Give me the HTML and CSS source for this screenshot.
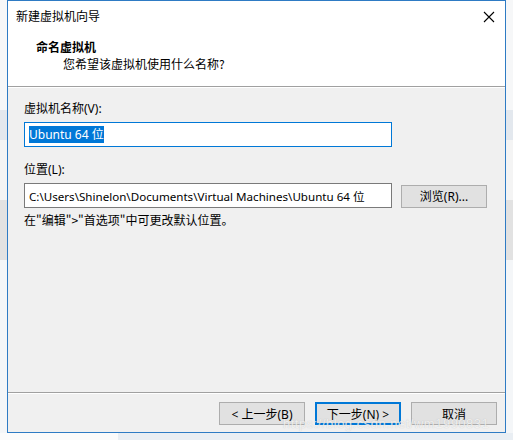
FILE: index.html
```html
<!DOCTYPE html>
<html lang="zh-CN">
<head>
<meta charset="utf-8">
<link rel="stylesheet" href="styles.css">
</head>
<body>
<div class="screen">
  <div class="window">
    <div class="titlebar">
      <span class="title">新建虚拟机向导</span>
      <span class="close" aria-label="关闭">
        <svg width="12" height="12" viewBox="0 0 12 12"><path d="M1 1L11 11M11 1L1 11" stroke="#000" stroke-width="1.1" fill="none"/></svg>
      </span>
    </div>
    <div class="header">
      <div class="h-title">命名虚拟机</div>
      <div class="h-sub">您希望该虚拟机使用什么名称?</div>
    </div>
    <div class="body">
      <div class="label l1">虚拟机名称(V):</div>
      <div class="input focused"><span class="sel">Ubuntu 64 位</span></div>
      <div class="label l2">位置(L):</div>
      <div class="row">
        <div class="input">C:\Users\Shinelon\Documents\Virtual Machines\Ubuntu 64 位</div>
        <div class="btn browse">浏览(R)...</div>
      </div>
      <div class="note">在"编辑">"首选项"中可更改默认位置。</div>
    </div>
    <div class="footer">
      <div class="btn">&lt; 上一步(B)</div>
      <div class="btn default">下一步(N) &gt;</div>
      <div class="btn">取消</div>
    </div>
  </div>
  <div class="below"><div class="below-left"></div><div class="below-right"></div></div>
  <div class="watermark">https://blog.csdn.net/wm1990831</div>
</div>
</body>
</html>
```

FILE: styles.css
```css
* { box-sizing: border-box; }
html, body { margin: 0; padding: 0; }
body {
  width: 513px;
  height: 440px;
  overflow: hidden;
  background: #f7f8fa;
  font-family: "Noto Sans", "Noto Sans CJK SC", sans-serif;
  font-size: 12px;
  color: #000;
}
.screen {
  position: relative;
  width: 513px;
  height: 440px;
  background: linear-gradient(to bottom, #f6f7f8 0, #f6f7f8 110px, #e3e8ee 110px, #e3e8ee 140px, #f4f4f4 140px, #f4f4f4 200px, #e2e2e2 200px, #e2e2e2 260px, #f4f6f8 260px);
}
.window {
  margin-left: 7px;
  width: 499px;
  height: 433px;
  border: 1px solid #2e7bc4;
  background: #f0f0f0;
  display: flex;
  flex-direction: column;
}
.titlebar {
  height: 30px;
  background: #fff;
  display: flex;
  align-items: center;
  justify-content: space-between;
  padding: 0 10px 0 8px;
}
.title { font-family: "Noto Sans CJK SC", sans-serif; font-size: 12px; margin-top: -1px; }
.close { display: flex; width: 12px; height: 12px; margin-top: 1px; }
.header {
  height: 56px;
  background: #fff;
  border-bottom: 1px solid #a0a0a0;
  padding: 7px 0 0 28px;
  font-family: "Noto Sans CJK SC", sans-serif;
}
.h-title { font-weight: bold; font-size: 12px; line-height: 17px; }
.h-sub { padding-left: 27px; line-height: 17px; }
.body {
  flex: 1;
  padding: 13px 0 0 16px;
  border-top: 1px solid #fff;
}
.label { line-height: 16px; font-family: "Noto Sans", "Noto Sans CJK SC", sans-serif; }
.l1 { margin-bottom: 5px; }
.l2 { margin-top: 15px; margin-bottom: 5px; }
.input {
  width: 368px;
  height: 25px;
  border: 1px solid #7a7a7a;
  background: #fff;
  padding: 0 4px;
  display: flex;
  align-items: center;
  white-space: nowrap;
  font-size: 11.6px;
}
.input.focused { border-color: #0078d7; }
.sel { background: #0078d7; color: #fff; line-height: 17px; font-size: 12px; }
.row { display: flex; gap: 9px; align-items: center; }
.btn {
  width: 86px;
  height: 23px;
  background: #e1e1e1;
  border: 1px solid #adadad;
  display: flex;
  align-items: center;
  justify-content: center;
  font-size: 12px;
  color: #000;
}
.browse { height: 23px; margin-top: 1px; }
.note { margin-top: 4px; line-height: 16px; font-family: "Noto Sans CJK SC", sans-serif; }
.footer {
  height: 40px;
  border-top: 1px solid #a0a0a0;
  display: flex;
  justify-content: flex-end;
  gap: 10px;
  padding: 9px 8px 0 0;
  box-shadow: inset 0 1px 0 #fff;
}
.footer .btn { width: 86px; }
.footer .btn.default { border: 2px solid #0078d7; }
.below { display: flex; height: 7px; }
.below-left { width: 118px; background: #fbfbfb; }
.below-right { flex: 1; background: #e9eef3; }
.watermark {
  position: absolute;
  left: 283px;
  top: 416px;
  font-family: "Liberation Sans", sans-serif;
  font-size: 13px;
  color: rgba(255,255,255,0.75);
  text-shadow: 0 0 1px rgba(140,140,140,0.5);
  letter-spacing: 0.5px;
  pointer-events: none;
}
```
